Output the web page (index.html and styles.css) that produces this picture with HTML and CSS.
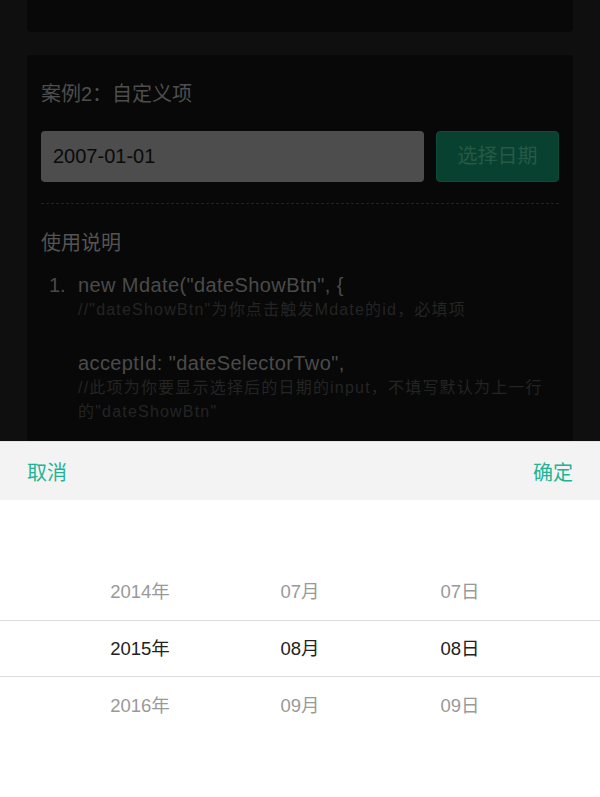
FILE: index.html
```html
<!DOCTYPE html>
<html lang="zh-CN">
<head>
<meta charset="utf-8">
<title>Mdate</title>
<link rel="stylesheet" href="styles.css">
</head>
<body>
<div class="page">
  <div class="card card-top"></div>
  <div class="card card-main">
    <div class="title">案例2：自定义项</div>
    <div class="field-row">
      <div class="date-input">2007-01-01</div>
      <div class="date-btn">选择日期</div>
    </div>
    <div class="divider"></div>
    <div class="subtitle">使用说明</div>
    <div class="usage">
      <div class="num">1.</div>
      <div class="usage-body">
        <div class="code">new Mdate("dateShowBtn", {</div>
        <div class="comment">//"dateShowBtn"为你点击触发Mdate的id，必填项</div>
        <div class="code spaced">acceptId: "dateSelectorTwo",</div>
        <div class="comment">//此项为你要显示选择后的日期的input，不填写默认为上一行的"dateShowBtn"</div>
      </div>
    </div>
  </div>
</div>

<div class="picker">
  <div class="picker-head">
    <span class="act">取消</span>
    <span class="act">确定</span>
  </div>
  <div class="picker-body">
    <div class="band"></div>
    <div class="cols">
      <div class="col">
        <div class="item">2014年</div>
        <div class="item sel">2015年</div>
        <div class="item">2016年</div>
      </div>
      <div class="col">
        <div class="item">07月</div>
        <div class="item sel">08月</div>
        <div class="item">09月</div>
      </div>
      <div class="col">
        <div class="item">07日</div>
        <div class="item sel">08日</div>
        <div class="item">09日</div>
      </div>
    </div>
  </div>
</div>
</body>
</html>
```

FILE: styles.css
```css
html, body {
  margin: 0;
  padding: 0;
  height: 797px;
  overflow: hidden;
}
body {
  background: #0f0f0f;
  font-family: "Liberation Sans", "Noto Sans CJK SC", sans-serif;
}
.page {
  display: flex;
  flex-direction: column;
  gap: 23px;
}
.card {
  margin: 0 27px;
  background: #080808;
}
.card-top {
  height: 32px;
  border-radius: 0 0 4px 4px;
}
.card-main {
  border-radius: 4px;
  padding: 25px 14px 40px;
  height: 420px;
}
.title {
  font-size: 20px;
  line-height: 28px;
  color: #4e4e4e;
}
.field-row {
  display: flex;
  gap: 12px;
  margin-top: 23px;
  height: 51px;
}
.date-input {
  flex: 1;
  background: #4d4d4d;
  border-radius: 4px;
  padding-left: 12px;
  font-size: 20px;
  line-height: 51px;
  color: #0a0a0a;
}
.date-btn {
  width: 123px;
  box-sizing: border-box;
  background: #08412f;
  border: 1px solid #0c4c38;
  border-radius: 4px;
  text-align: center;
  font-size: 20px;
  line-height: 49px;
  color: #255a47;
}
.divider {
  margin-top: 21px;
  border-top: 1px dashed #222;
}
.subtitle {
  margin-top: 25px;
  font-size: 20px;
  line-height: 28px;
  color: #545454;
}
.usage {
  display: flex;
  margin-top: 15px;
}
.num {
  width: 29px;
  padding-left: 8px;
  font-size: 20px;
  line-height: 26px;
  color: #4a4a4a;
}
.usage-body {
  flex: 1;
}
.code {
  font-size: 20px;
  line-height: 26px;
  letter-spacing: 0.4px;
  color: #4b4b4b;
}
.code.spaced {
  margin-top: 28px;
}
.comment {
  font-size: 16px;
  line-height: 24px;
  letter-spacing: 1.2px;
  color: #242424;
  padding-right: 10px;
}

.picker {
  position: fixed;
  left: 0;
  right: 0;
  bottom: 0;
  height: 356px;
  display: flex;
  flex-direction: column;
  background: #fff;
}
.picker-head {
  height: 59px;
  background: #f3f3f3;
  border-top: 1px solid #e4e4e4;
  box-sizing: border-box;
  display: flex;
  justify-content: space-between;
  align-items: center;
  padding: 0 27px;
}
.act {
  font-size: 20px;
  color: #22b395;
}
.picker-body {
  flex: 1;
  position: relative;
  padding-top: 63px;
}
.band {
  position: absolute;
  left: 0;
  right: 0;
  top: 120px;
  height: 57px;
  box-sizing: border-box;
  border-top: 1px solid #dcdcdc;
  border-bottom: 1px solid #dcdcdc;
}
.cols {
  width: 480px;
  margin: 0 auto;
  display: grid;
  grid-template-columns: repeat(3, 1fr);
}
.item {
  height: 57px;
  line-height: 57px;
  text-align: center;
  font-size: 18.5px;
  color: #999;
}
.item.sel {
  color: #222;
}
```
